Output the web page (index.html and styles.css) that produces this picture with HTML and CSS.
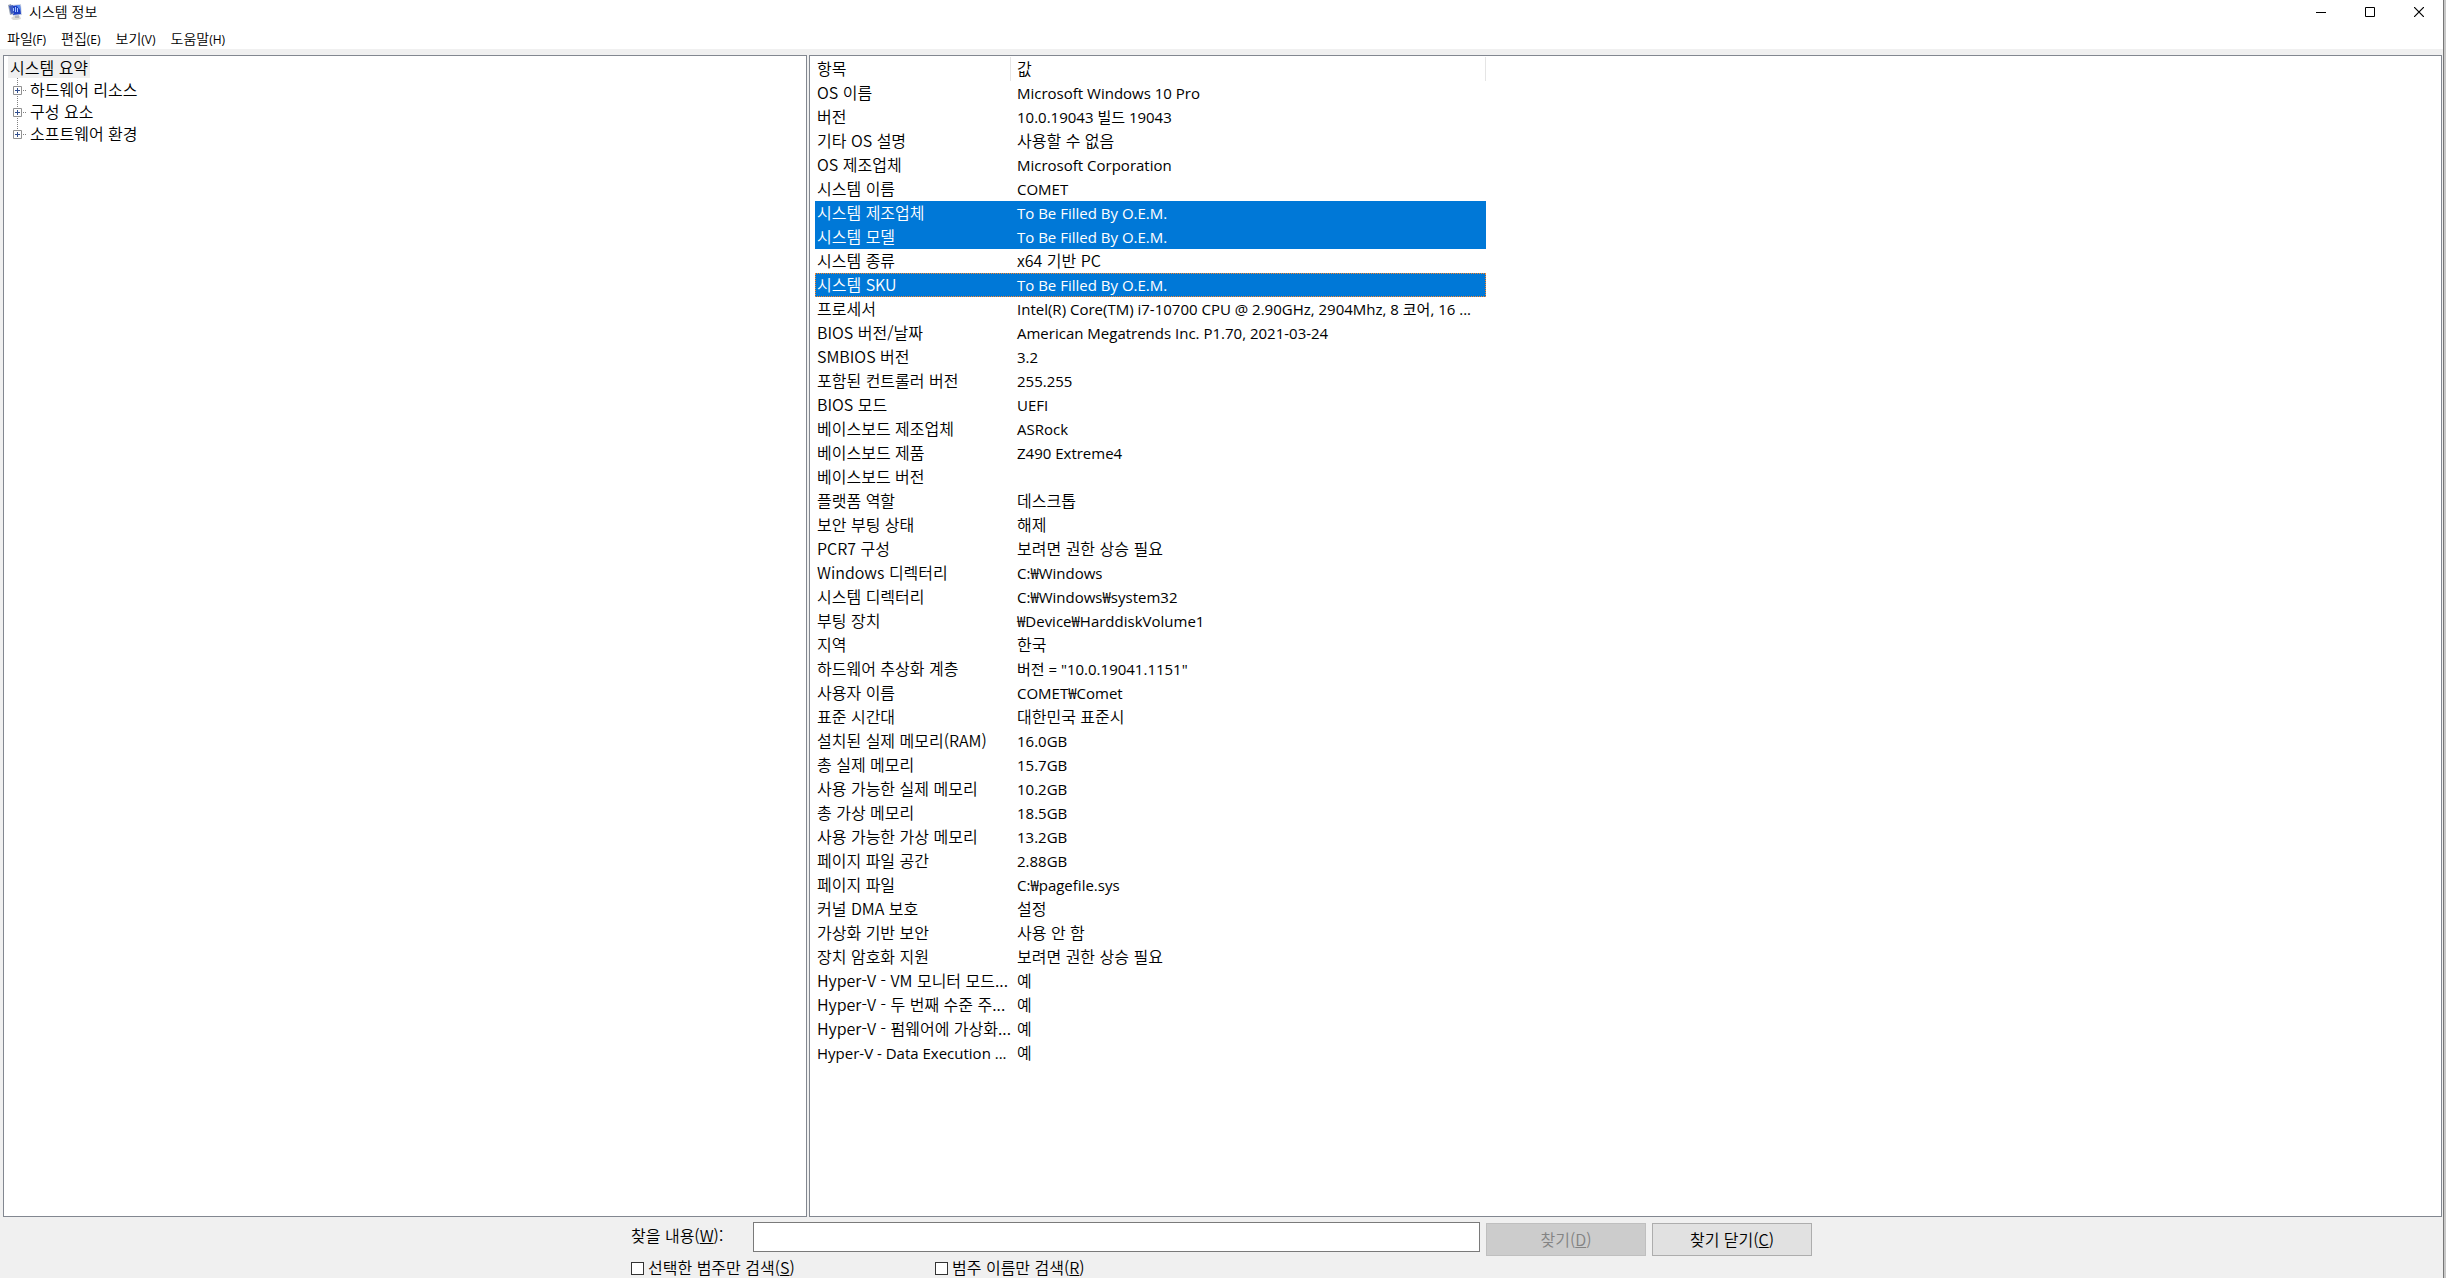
FILE: index.html
```
<!DOCTYPE html>
<html lang="ko">
<head>
<meta charset="utf-8">
<title>시스템 정보</title>
<link rel="stylesheet" href="styles.css">
</head>
<body>
<div class="window">
  <header class="titlebar">
    <svg class="app-icon" width="16" height="18" viewBox="0 0 16 18" aria-hidden="true">
      <path d="M3 15l3-2 6 0 1 3-4 1-4 0z" fill="#dcdcd6"/>
      <path d="M7 12l4 0 0 3-4 0z" fill="#b4b8bc"/>
      <path d="M3 2l10-1 1 11-9 1z" fill="#cfd5e4"/>
      <path d="M4 3l8-1 1 9-8 1z" fill="#1c3fc4"/>
      <path d="M8 2l4 0 1 6z" fill="#5a8cf0"/>
      <path d="M0 2l3-1 3 10-4 1z" fill="#9aa4b4"/>
      <path d="M1 3l4-1 1 8-3 1z" fill="#3f5cc0"/>
      <path d="M5.500 8V5M7.500 9V4M9.500 9V5" stroke="#a9c6ff" fill="none"/>
    </svg>
    <h1 class="title">시스템 정보</h1>
    <div class="controls">
      <button class="control" type="button" aria-label="최소화"><svg width="10" height="11" viewBox="0 0 10 11"><path d="M0 5.500h10" stroke="#000"/></svg></button>
      <button class="control" type="button" aria-label="최대화"><svg width="10" height="10" viewBox="0 0 10 10"><path d="M.5.5h9v9h-9z" fill="none" stroke="#000"/></svg></button>
      <button class="control" type="button" aria-label="닫기"><svg width="10" height="10" viewBox="0 0 10 10"><path d="M0 0l10 10M10 0L0 10" stroke="#000" stroke-width="1.200"/></svg></button>
    </div>
  </header>
  <nav class="menubar">
    <button class="menu" type="button">파일<span class="key">(F)</span></button>
    <button class="menu" type="button">편집<span class="key">(E)</span></button>
    <button class="menu" type="button">보기<span class="key">(V)</span></button>
    <button class="menu" type="button">도움말<span class="key">(H)</span></button>
  </nav>
  <main class="panes">
    <section class="pane tree-pane">
      <div class="tree-root">시스템 요약</div>
      <ul class="tree">
        <li class="node"><svg class="expander" width="14" height="9" viewBox="0 0 14 9"><path d="M.5.5h8v8h-8z" fill="#fff" stroke="#919191"/><path d="M2 4.500h5M4.500 2v5" stroke="#33508f"/><path d="M10 4.500h4" stroke="#808080" stroke-dasharray="1 1"/></svg>하드웨어 리소스</li>
        <li class="node"><svg class="expander" width="14" height="9" viewBox="0 0 14 9"><path d="M.5.5h8v8h-8z" fill="#fff" stroke="#919191"/><path d="M2 4.500h5M4.500 2v5" stroke="#33508f"/><path d="M10 4.500h4" stroke="#808080" stroke-dasharray="1 1"/></svg>구성 요소</li>
        <li class="node"><svg class="expander" width="14" height="9" viewBox="0 0 14 9"><path d="M.5.5h8v8h-8z" fill="#fff" stroke="#919191"/><path d="M2 4.500h5M4.500 2v5" stroke="#33508f"/><path d="M10 4.500h4" stroke="#808080" stroke-dasharray="1 1"/></svg>소프트웨어 환경</li>
      </ul>
    </section>
    <section class="pane list-pane">
      <table class="list">
        <colgroup><col class="col-item"><col class="col-value"></colgroup>
        <thead><tr><th scope="col">항목</th><th scope="col">값</th></tr></thead>
        <tbody>
          <tr><td>OS 이름</td><td class="latin">Microsoft Windows 10 Pro</td></tr>
          <tr><td>버전</td><td class="latin">10.0.19043 빌드 19043</td></tr>
          <tr><td>기타 OS 설명</td><td>사용할 수 없음</td></tr>
          <tr><td>OS 제조업체</td><td class="latin">Microsoft Corporation</td></tr>
          <tr><td>시스템 이름</td><td class="latin">COMET</td></tr>
          <tr class="selected"><td>시스템 제조업체</td><td class="latin">To Be Filled By O.E.M.</td></tr>
          <tr class="selected"><td>시스템 모델</td><td class="latin">To Be Filled By O.E.M.</td></tr>
          <tr><td>시스템 종류</td><td>x64 기반 PC</td></tr>
          <tr class="selected focused"><td>시스템 SKU</td><td class="latin">To Be Filled By O.E.M.</td></tr>
          <tr><td>프로세서</td><td class="latin">Intel(R) Core(TM) i7-10700 CPU @ 2.90GHz, 2904Mhz, 8 코어, 16 ...</td></tr>
          <tr><td>BIOS 버전/날짜</td><td class="latin">American Megatrends Inc. P1.70, 2021-03-24</td></tr>
          <tr><td>SMBIOS 버전</td><td class="latin">3.2</td></tr>
          <tr><td>포함된 컨트롤러 버전</td><td class="latin">255.255</td></tr>
          <tr><td>BIOS 모드</td><td class="latin">UEFI</td></tr>
          <tr><td>베이스보드 제조업체</td><td class="latin">ASRock</td></tr>
          <tr><td>베이스보드 제품</td><td class="latin">Z490 Extreme4</td></tr>
          <tr><td>베이스보드 버전</td><td></td></tr>
          <tr><td>플랫폼 역할</td><td>데스크톱</td></tr>
          <tr><td>보안 부팅 상태</td><td>해제</td></tr>
          <tr><td>PCR7 구성</td><td>보려면 권한 상승 필요</td></tr>
          <tr><td>Windows 디렉터리</td><td class="latin">C:₩Windows</td></tr>
          <tr><td>시스템 디렉터리</td><td class="latin">C:₩Windows₩system32</td></tr>
          <tr><td>부팅 장치</td><td class="latin">₩Device₩HarddiskVolume1</td></tr>
          <tr><td>지역</td><td>한국</td></tr>
          <tr><td>하드웨어 추상화 계층</td><td class="latin">버전 = "10.0.19041.1151"</td></tr>
          <tr><td>사용자 이름</td><td class="latin">COMET₩Comet</td></tr>
          <tr><td>표준 시간대</td><td>대한민국 표준시</td></tr>
          <tr><td>설치된 실제 메모리(RAM)</td><td class="latin">16.0GB</td></tr>
          <tr><td>총 실제 메모리</td><td class="latin">15.7GB</td></tr>
          <tr><td>사용 가능한 실제 메모리</td><td class="latin">10.2GB</td></tr>
          <tr><td>총 가상 메모리</td><td class="latin">18.5GB</td></tr>
          <tr><td>사용 가능한 가상 메모리</td><td class="latin">13.2GB</td></tr>
          <tr><td>페이지 파일 공간</td><td class="latin">2.88GB</td></tr>
          <tr><td>페이지 파일</td><td class="latin">C:₩pagefile.sys</td></tr>
          <tr><td>커널 DMA 보호</td><td>설정</td></tr>
          <tr><td>가상화 기반 보안</td><td>사용 안 함</td></tr>
          <tr><td>장치 암호화 지원</td><td>보려면 권한 상승 필요</td></tr>
          <tr><td>Hyper-V - VM 모니터 모드...</td><td>예</td></tr>
          <tr><td>Hyper-V - 두 번째 수준 주...</td><td>예</td></tr>
          <tr><td>Hyper-V - 펌웨어에 가상화...</td><td>예</td></tr>
          <tr><td class="latin">Hyper-V - Data Execution ...</td><td>예</td></tr>
        </tbody>
      </table>
    </section>
  </main>
  <form class="find">
    <div class="find-row">
      <label class="find-label" for="find-text">찾을 내용(<u>W</u>):</label>
      <input class="find-text" id="find-text" type="text">
      <button class="button" type="button" disabled>찾기(<u>D</u>)</button>
      <button class="button" type="button">찾기 닫기(<u>C</u>)</button>
    </div>
    <div class="options">
      <label class="option"><input class="check" type="checkbox"><span>선택한 범주만 검색(<u>S</u>)</span></label>
      <label class="option"><input class="check" type="checkbox"><span>범주 이름만 검색(<u>R</u>)</span></label>
    </div>
  </form>
</div>
</body>
</html>
```
FILE: styles.css
```
* {
  box-sizing: border-box;
}

body {
  margin: 0;
  background: #f0f0f0;
  color: #000;
  font: 16px/22px "Noto Sans CJK KR", sans-serif;
  font-weight: 350;
}

button,
input {
  font: inherit;
  color: inherit;
}

.window {
  display: flex;
  flex-direction: column;
  height: 100vh;
  border-right: 2px solid #c8c8c8;
  box-shadow: inset -1px 0 #777;
}

.titlebar {
  display: flex;
  align-items: center;
  flex: none;
  height: 24px;
  margin-right: 1px;
  padding-left: 8px;
  background: #fff;
}

.title {
  flex: 1;
  margin: 0 0 2px 5px;
  font-size: 14px;
  font-weight: inherit;
}

.controls {
  display: flex;
}

.control {
  display: flex;
  align-items: center;
  justify-content: center;
  width: 49px;
  height: 24px;
  padding: 0;
  border: 0;
  background: none;
}

.menubar {
  display: flex;
  flex: none;
  gap: 15px;
  height: 25px;
  margin-right: 1px;
  padding: 3px 7px 0;
  background: #fff;
}

.menu {
  height: 22px;
  padding: 0;
  border: 0;
  background: none;
  font-size: 14px;
}

.key {
  font-family: "Open Sans", sans-serif;
  font-size: 12px;
  font-weight: 400;
}

.panes {
  display: grid;
  flex: 1;
  grid-template-columns: 804fr 1633fr;
  gap: 2px;
  min-height: 0;
  padding: 6px 2px 0 3px;
}

.pane {
  overflow: hidden;
  border: 1px solid #828790;
  background: #fff;
}

.tree-pane {
  padding: 0 4px;
}

.tree-root {
  width: max-content;
  padding: 0 2px;
  background: #f0f0f0;
}

.tree {
  margin: 0 0 0 5px;
  padding: 0;
  list-style: none;
}

.node {
  display: flex;
  align-items: center;
  gap: 3px;
  background: repeating-linear-gradient(#808080 0 1px, transparent 1px 2px) 4px 0 / 1px 100% no-repeat;
}

.node:last-child {
  background-size: 1px 50%;
}

.expander {
  margin-top: 2px;
}

.list-pane {
  padding: 1px 5px;
}

.list {
  width: 671px;
  border-collapse: collapse;
  table-layout: fixed;
}

.col-item {
  width: 200px;
}

.list th,
.list td {
  height: 24px;
  padding: 0 2px;
  font-weight: inherit;
  text-align: left;
  vertical-align: top;
  white-space: nowrap;
}

.list .latin {
  font-family: "Open Sans", "Noto Sans CJK KR", sans-serif;
  font-size: 15px;
  font-weight: 400;
  line-height: 24px;
}

.list th {
  background: linear-gradient(#e5e5e5, #e5e5e5) right / 1px 100% no-repeat;
}

.list th:first-child {
  background-position: 195px 0;
}

.selected {
  background: #0078d7;
  color: #fff;
}

.focused {
  outline: 1px dotted #ff8728;
  outline-offset: -1px;
}

.find {
  flex: none;
  width: 1182px;
  max-width: 100%;
  margin: 0 auto;
  padding: 5px 1px 0 0;
}

.find-row {
  display: grid;
  grid-template-columns: 116px 1fr 160px 160px;
  gap: 6px;
}

.find-label {
  padding-top: 2px;
}

.find-text {
  width: 100%;
  height: 30px;
  padding: 0 6px;
  border: 1px solid #7a7a7a;
  border-radius: 0;
  background: #fff;
}

.button {
  height: 33px;
  margin-top: 1px;
  padding: 0 0 2px;
  border: 1px solid #adadad;
  background: #e1e1e1;
}

.button:disabled {
  border-color: #bfbfbf;
  background: #ccc;
  color: #838383;
}

.options {
  display: grid;
  grid-template-columns: 304px 1fr;
  height: 22px;
}

.option {
  display: flex;
  align-items: center;
  gap: 4px;
}

.check {
  width: 13px;
  height: 13px;
  margin: 2px 0 0;
  border: 1px solid #333;
  background: #fff;
  appearance: none;
}
```
